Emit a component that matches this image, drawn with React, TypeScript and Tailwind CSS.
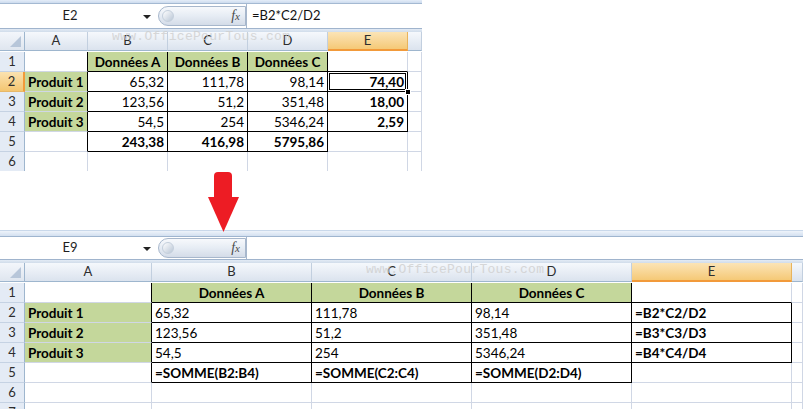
import React from 'react';

type Cell = {
  v?: string;
  bold?: boolean;
  align?: 'l' | 'r' | 'c';
  green?: boolean;
  box?: boolean;
};

const e: Cell = {};
const hd = (v: string): Cell => ({ v, bold: true, align: 'c', green: true, box: true });
const prod = (v: string): Cell => ({ v, bold: true, align: 'l', green: true });
const num = (v: string, bold = false): Cell => ({ v, bold, align: 'r', box: true });
const txt = (v: string, bold = false): Cell => ({ v, bold, align: 'l', box: true });

const topRows: Cell[][] = [
  [e, hd('Données A'), hd('Données B'), hd('Données C'), e, e],
  [prod('Produit 1'), num('65,32'), num('111,78'), num('98,14'), num('74,40', true), e],
  [prod('Produit 2'), num('123,56'), num('51,2'), num('351,48'), num('18,00', true), e],
  [prod('Produit 3'), num('54,5'), num('254'), num('5346,24'), num('2,59', true), e],
  [e, num('243,38', true), num('416,98', true), num('5795,86', true), e, e],
  [e, e, e, e, e, e],
];

const bottomRows: Cell[][] = [
  [e, hd('Données A'), hd('Données B'), hd('Données C'), e, e],
  [prod('Produit 1'), txt('65,32'), txt('111,78'), txt('98,14'), txt('=B2*C2/D2', true), e],
  [prod('Produit 2'), txt('123,56'), txt('51,2'), txt('351,48'), txt('=B3*C3/D3', true), e],
  [prod('Produit 3'), txt('54,5'), txt('254'), txt('5346,24'), txt('=B4*C4/D4', true), e],
  [e, txt('=SOMME(B2:B4)', true), txt('=SOMME(C2:C4)', true), txt('=SOMME(D2:D4)', true), e, e],
  [e, e, e, e, e, e],
  [e, e, e, e, e, e],
];

const letters = ['A', 'B', 'C', 'D', 'E', ''];

function FormulaBar({ name, formula, tall }: { name: string; formula: string; tall?: boolean }) {
  return (
    <div className="flex flex-col w-full">
      {tall ? (
        <div className="h-[7px] bg-linear-to-b from-[#eef3fa] to-[#d3e0f0] border-t border-t-[#c9d8ea] border-b border-b-[#9fb5cf]" />
      ) : (
        <div className="h-[4px] bg-linear-to-b from-[#e4edf8] to-[#cddbee] border-b border-b-[#a4b9d2]" />
      )}
      <div className={`flex items-stretch bg-white ${tall ? 'h-[22px]' : 'h-[24px]'}`}>
        <div className="relative w-[158px] flex items-center justify-center pr-[18px] font-['Lato'] text-[13px] text-[#1e1e1e]">
          {name}
          <span className="absolute right-[7px] top-1/2 -translate-y-[1px] w-0 h-0 border-l-[4px] border-r-[4px] border-t-[4px] border-l-transparent border-r-transparent border-t-[#222]" />
        </div>
        <div className="relative self-center w-[88px] h-[20px] rounded-l-full border border-[#a7b7cc] bg-linear-to-b from-[#f7f9fc] via-[#e6ecf4] to-[#d4dce8]">
          <span className="absolute left-[3px] top-[3px] w-[12px] h-[12px] rounded-full bg-linear-to-br from-[#ffffff] to-[#b9c6d6] border border-[#c4cfdc]" />
          <span className="absolute right-[5px] top-[0px] font-['Liberation_Serif'] italic text-[14px] text-[#4a4a4a] leading-[18px]">
            f<span className="text-[11px]">x</span>
          </span>
        </div>
        <div className="flex-1 flex items-center pl-[5px] font-['Lato'] text-[13px] text-[#111] border-l border-l-[#a7b7cc]">
          {formula}
        </div>
      </div>
      <div className="h-[4px] border-t border-t-[#a0b4cd] bg-linear-to-b from-[#e3ebf5] to-[#d0dcea]" />
    </div>
  );
}

function Sheet({
  rows,
  cols,
  selCol,
  selRow,
  selCell,
  height,
}: {
  rows: Cell[][];
  cols: string;
  selCol: number;
  selRow?: number;
  selCell?: [number, number];
  height: string;
}) {
  const isBox = (r: number, c: number) => !!rows[r]?.[c]?.box;
  return (
    <div className={`grid ${cols} auto-rows-[20px] overflow-hidden ${height} font-['Lato']`}>
      {/* header row */}
      <div className="h-[19px] relative bg-linear-to-b from-[#f3f6fb] to-[#dfe6ef] border-r border-r-[#9eb6ce] border-b border-b-[#9eb6ce]">
        <svg className="absolute right-[3px] bottom-[3px]" width="11" height="11" viewBox="0 0 11 11">
          <polygon points="11,0 11,11 0,11" fill="#b7c6d9" />
        </svg>
      </div>
      {letters.map((l, i) =>
        i === selCol ? (
          <div
            key={i}
            className="h-[19px] flex items-center justify-center text-[13px] text-[#2d2d2d] bg-linear-to-b from-[#fbe4b6] to-[#f5c976] border-r border-r-[#e8b35c] border-b-2 border-b-[#f29a3a]"
          >
            {l}
          </div>
        ) : (
          <div
            key={i}
            className="h-[19px] flex items-center justify-center text-[13px] text-[#2d2d2d] bg-linear-to-b from-[#f5f8fc] to-[#dbe3ee] border-r border-r-[#c2cfdf] border-b border-b-[#9eb6ce]"
          >
            {l}
          </div>
        ),
      )}
      {rows.map((row, r) => (
        <React.Fragment key={r}>
          <div
            className={
              r === selRow
                ? 'flex items-center justify-center text-[13px] text-[#2d2d2d] bg-linear-to-b from-[#fbe2b0] to-[#f4c670] border-r-2 border-r-[#f29a3a] border-b border-b-[#e7b869]'
                : 'flex items-center justify-center text-[13px] text-[#2d2d2d] bg-[#e4ebf5] border-r border-r-[#9eb6ce] border-b border-b-[#c5d2e3]'
            }
          >
            {r + 1}
          </div>
          {row.map((cell, c) => {
            const rb = isBox(r, c) || isBox(r, c + 1);
            const bb = isBox(r, c) || isBox(r + 1, c);
            const sel = selCell && selCell[0] === r && selCell[1] === c;
            return (
              <div
                key={c}
                className={`relative flex items-center px-[3px] pt-[2px] text-[13.5px] text-black whitespace-nowrap ${
                  cell.green ? 'bg-[#c4d79b]' : 'bg-white'
                } ${rb ? 'border-r border-r-black' : 'border-r border-r-[#d0d7e5]'} ${
                  bb ? 'border-b border-b-black' : 'border-b border-b-[#d0d7e5]'
                } ${cell.bold ? 'font-bold' : 'font-normal'} ${
                  cell.align === 'r' ? 'justify-end' : cell.align === 'c' ? 'justify-center' : 'justify-start'
                }`}
              >
                {cell.v}
                {sel && (
                  <>
                    <span className="absolute inset-[1px] border border-black pointer-events-none" />
                    <span className="absolute -right-[4px] -bottom-[4px] w-[6px] h-[6px] bg-black border border-white z-10" />
                  </>
                )}
              </div>
            );
          })}
        </React.Fragment>
      ))}
    </div>
  );
}

export default function App() {
  return (
    <div className="relative w-[803px] h-[409px] overflow-hidden bg-white">
      <div className="w-[422px] flex flex-col">
        <FormulaBar name="E2" formula="=B2*C2/D2" />
        <Sheet rows={topRows} cols="grid-cols-[25px_63px_80px_80px_80px_80px_14px]" selCol={4} selRow={1} selCell={[1, 4]} height="h-[139px]" />
      </div>
      <div className="h-[59px]" />
      <div className="w-full flex flex-col">
        <FormulaBar name="E9" formula="" tall />
        <Sheet rows={bottomRows} cols="grid-cols-[25px_127px_160px_160px_160px_160px_11px]" selCol={4} height="h-[146px]" />
      </div>

      {/* watermarks */}
      <span className="absolute left-[112px] top-[27px] font-['Liberation_Mono'] text-[13px] tracking-[0.3px] text-[#cfcfcf] opacity-80 pointer-events-none">
        www.OfficePourTous.com
      </span>
      <span className="absolute left-[366px] top-[260px] font-['Liberation_Mono'] text-[13px] tracking-[0.3px] text-[#cfcfcf] opacity-80 pointer-events-none">
        www.OfficePourTous.com
      </span>

      {/* arrow */}
      <svg className="absolute left-[205px] top-[171px]" width="36" height="62" viewBox="0 0 36 62">
        <rect x="9" y="1" width="18" height="30" rx="4" fill="#ed1c24" />
        <polygon points="3,26 34,26 18.5,61" fill="#ed1c24" />
      </svg>
    </div>
  );
}
